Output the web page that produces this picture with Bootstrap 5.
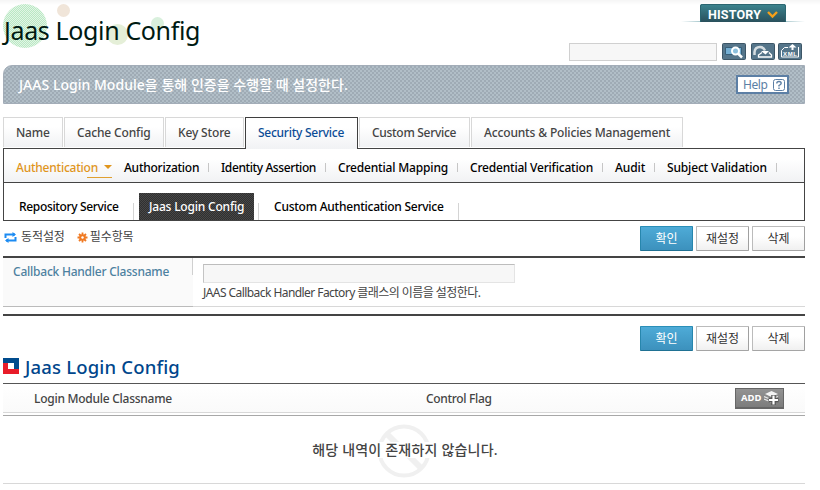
<!DOCTYPE html>
<html lang="ko">
<head>
<meta charset="utf-8">
<title>Jaas Login Config</title>
<link href="https://cdn.jsdelivr.net/npm/bootstrap@5.3.0/dist/css/bootstrap.min.css" rel="stylesheet">
<style>
body{font:500 12px/16px "Noto Sans","Noto Sans CJK KR",sans-serif;color:#444;background:linear-gradient(#f5f5f5,#fff 5px) no-repeat;overflow:hidden;white-space:nowrap}
.page{width:802px;margin-left:3px;height:490px}
.top{height:65px}
.top-title{font-size:25px;font-weight:400;line-height:34px;letter-spacing:-.36px;color:#001a12;padding-top:13px;margin:0 0 0 1px}
.bubbles{left:0;top:0;z-index:-1}
.history{right:0;top:4px}
.search-row{padding:43px 3px 0 0}
.search-box{width:148px;height:18px;border:1px solid #d0d0d0;background:#f7f7f7;border-radius:0;padding:0;margin-right:5px}
.banner{height:39px;border-radius:9px 0 0 0;border:1px solid #a3adb8;background:repeating-conic-gradient(#9fabb5 0 25%,#b1bec7 0 50%) 0 0/4px 4px;color:#fff;font-size:14px;font-weight:500;letter-spacing:.03px;padding:0 15px 0 15px;margin-bottom:13px}
.help{width:53px;height:19px;border:2px solid #5c7fa5;background:#fff;color:#5c7fa5;font-size:12px;font-weight:400;letter-spacing:-.4px;padding:0 2px 0 5px}
.tabs{gap:1px;height:31px}
.tabs .tab{height:30px;border:1px solid #d8d8d8;border-bottom:0;background:linear-gradient(#fff 30%,#f1f2f4);color:#444;line-height:29px;padding:0 0 0 12px}
.tabs .tab.on{height:32px;border-color:#3f3f3f;color:#0b4c96;z-index:1;margin-right:0}
.panel{border:1px solid #444;height:73px}
.lvl2{height:34px;border-bottom:1px solid #444;background:linear-gradient(#fff 30%,#f1f2f4);padding:3px 0 0 12px;color:#000}
.lvl2 span{border-right:1px solid #c6c6c6;height:9px;line-height:9px}
.lvl2 .cur{color:#e0951c;border:0;width:108px}
.caret{left:88px;top:2px;border:4px solid transparent;border-top-color:#e0951c;border-bottom:0}
.cur-line{left:71px;top:14px;width:25px;height:1px;background:#e0a030}
.lvl3{height:37px;color:#000;padding-left:15px}
.lvl3 .it{height:27px;line-height:27px}
.lvl3 .dk{width:115px;padding-left:10px;color:#fff;background:repeating-conic-gradient(#303030 0 25%,#474747 0 50%) 0 0/2px 2px}
.lvl3 .sep{width:1px;height:17px;background:#d4d4d4}
.actions{height:35px;gap:3px;padding-top:5px}
.legend{letter-spacing:-.1px;font-weight:400;line-height:22px}
.cmd{width:53px;height:25px;border:1px solid #bbb;border-right-color:#a0a0a0;border-bottom-color:#a5a5a5;border-radius:1px;background:linear-gradient(#fff 40%,#f0f0f0);color:#333;font-size:12px;font-weight:400;line-height:22px;padding:0}
.cmd.main{background:linear-gradient(#4eabd7,#3c91bd);border-color:#2a8fb8 #2786ad #1f7193;color:#fff}
.form-area{border-top:2px solid #444;border-bottom:2px solid #444;height:60px}
.form-line{height:49px;border-bottom:1px solid #d8d8d8}
.th-name{width:190px;background:#fafafa;color:#4d81a0;padding:6px 0 0 10px;border-bottom:1px solid #bbb;height:49px;letter-spacing:-.23px}
.th-name::after{content:"";position:absolute;right:0;top:0;width:1px;height:17px;background:#d0d0d0}
.field{width:312px;height:19px;border:1px solid #e4e4e4;border-top-color:#bdbdbd;border-left-color:#c4c4c4;border-radius:0;background:#f7f7f7;padding:0}
.note{font-size:12px;font-weight:400;letter-spacing:-.56px;line-height:20px}
.sec-title{font-size:18.5px;font-weight:500;line-height:32px;height:32px;color:#00468c;letter-spacing:.17px;margin:0}
.list-head{border-top:1px solid #555;border-bottom:1px solid #d8d8d8;background:linear-gradient(#fff,#fafafa);height:30px}
.list-head span{padding-top:1px}
.add{width:49px;height:21px;border:1px solid #666;border-bottom-width:2px;border-radius:0;background:linear-gradient(#939393,#7c7c7c);color:#fff;font-size:9.5px;font-weight:700;padding:0 4px 0 5px;line-height:18px}
.empty{border-top:1px solid #a8a8a8;border-bottom:1px solid #d8d8d8;margin-top:2px;height:69px;font-size:14px;color:#444}
.empty-msg{letter-spacing:.2px;padding-left:2px}
svg{display:block;flex:none}
</style>
<script src="https://cdn.jsdelivr.net/npm/bootstrap@5.3.0/dist/js/bootstrap.bundle.min.js"></script>
</head>
<body>
<div class="page">
<header class="top position-relative d-flex justify-content-between">
  <svg class="bubbles position-absolute" width="200" height="60"><defs><pattern id="dots" width="2" height="2" patternUnits="userSpaceOnUse"><path fill="#e2f5e5" d="M0 0h2v2H0z"/><path fill="#b9e8c4" d="M0 0h1v1H0zM1 1h1v1H1z"/></pattern></defs><circle cx="22" cy="26" r="22" fill="url(#dots)"/><circle cx="60.500" cy="10.500" r="6.500" fill="#f0e5d9"/><circle cx="114.500" cy="34.500" r="10.500" fill="#e5efd8"/><circle cx="154.500" cy="23.500" r="6.500" fill="#d9f0dd"/></svg>
  <h1 class="top-title">Jaas Login Config</h1>
  <svg class="history position-absolute" width="124" height="19"><defs><linearGradient id="hg" x2="0" y2="1"><stop stop-color="#3c8590"/><stop offset="1" stop-color="#29505c"/></linearGradient><linearGradient id="hl"><stop stop-color="#8fb8bf" stop-opacity="0"/><stop offset=".2" stop-color="#8fb8bf"/><stop offset=".8" stop-color="#8fb8bf"/><stop offset="1" stop-color="#8fb8bf" stop-opacity="0"/></linearGradient></defs><path fill="url(#hl)" d="M0 17h124v1H0z"/><path fill="url(#hg)" d="M19 18V2q0-2 2-2h82q2 0 2 2v16z"/><path fill="none" stroke="#2b6570" d="M19.500 18V2q0-1.500 2-1.500h81q2 0 2 1.500v16"/><text x="27" y="14.500" fill="#fff" font-family="Roboto" font-size="12.500" font-weight="700" textLength="53">HISTORY</text><path d="M87 8l4.500 4.500L96 8" fill="none" stroke="#f5a01a" stroke-width="2.400"/></svg>
  <div class="search-row d-flex align-items-start">
    <input class="search-box form-control" aria-label="Search">
    <svg width="24" height="17"><rect x=".5" y=".5" width="23" height="16" rx="1" fill="#55758a" stroke="#3d5667"/><path fill="#74aed2" stroke="#375e78" d="M3.500 4.500h16v7h-16z"/><circle cx="13.500" cy="8" r="3.500" fill="#8dc0dd" stroke="#fff" stroke-width="2"/><path stroke="#fff" stroke-width="2.500" d="M16 10.500l4 4"/></svg>
    <svg width="24" height="17" style="margin:0 3px 0 5px"><rect x=".5" y=".5" width="23" height="16" rx="1" fill="#55758a" stroke="#3d5667"/><path d="M3.500 12V9q.5-5 5.500-5 3.500 0 5 3.500" fill="none" stroke="#d5dde1" stroke-width="2.500"/><path fill="#fff" d="M10 8h8l-3.500 3.500z"/><path fill="none" stroke="#fff" stroke-width="1.300" d="M11 9.500L7.500 12v2h13v-2L18 9.500"/></svg>
    <svg width="24" height="17"><rect x=".5" y=".5" width="23" height="16" rx="1" fill="#55758a" stroke="#3d5667"/><path fill="none" stroke="#fff" d="M10 4.500H6.500l-3 3v6.500h17V4"/><path fill="#fff" d="M14.500 1l4 3.500h-3V7h-2V4.500h-3z"/><text x="5" y="13" fill="#fff" font-family="Liberation Sans" font-size="6" font-weight="700" textLength="14">XML</text></svg>
  </div>
</header>
<section class="banner d-flex align-items-center justify-content-between">
  <span>JAAS Login Module을 통해 인증을 수행할 때 설정한다.</span>
  <a class="help d-flex align-items-center justify-content-between text-decoration-none"><span>Help</span><svg width="12" height="12"><rect x=".5" y=".5" width="11" height="11" rx="2" fill="#fff" stroke="#5c7fa5"/><path d="M3.800 4.500q0-2 2.200-2t2.200 1.800q0 1-2.200 2.200v1M6 8.500v1.500" fill="none" stroke="#5c7fa5" stroke-width="1.400"/></svg></a>
</section>
<nav class="tabs d-flex">
  <a class="tab text-decoration-none" style="width:60px;letter-spacing:-.2px">Name</a>
  <a class="tab text-decoration-none" style="width:100px;letter-spacing:-.15px">Cache Config</a>
  <a class="tab text-decoration-none" style="width:79px;letter-spacing:-.15px">Key Store</a>
  <a class="tab on position-relative text-decoration-none" style="width:113px;letter-spacing:-.26px">Security Service</a>
  <a class="tab text-decoration-none" style="width:111px;letter-spacing:-.3px">Custom Service</a>
  <a class="tab text-decoration-none" style="width:212px;letter-spacing:-.15px">Accounts &amp; Policies Management</a>
</nav>
<section class="panel">
  <div class="lvl2 d-flex align-items-center">
    <span class="cur position-relative" style="letter-spacing:-.23px">Authentication<i class="caret position-absolute"></i><i class="cur-line position-absolute"></i></span>
    <span style="width:85px;letter-spacing:-.25px">Authorization</span>
    <span style="width:117px;letter-spacing:-.4px;padding-left:12px">Identity Assertion</span>
    <span style="width:132px;letter-spacing:-.18px;padding-left:12px">Credential Mapping</span>
    <span style="width:145px;letter-spacing:-.2px;padding-left:12px">Credential Verification</span>
    <span style="width:52px;letter-spacing:-.1px;padding-left:12px">Audit</span>
    <span style="width:122px;letter-spacing:-.16px;padding-left:12px">Subject Validation</span>
  </div>
  <div class="lvl3 d-flex align-items-end">
    <span class="it" style="width:114px;letter-spacing:-.34px">Repository Service</span><i class="sep"></i>
    <span class="it dk" style="margin-left:5px;letter-spacing:-.2px">Jaas Login Config</span><i class="sep" style="margin-left:4px"></i>
    <span class="it" style="width:199px;padding-left:15px;letter-spacing:-.24px">Custom Authentication Service</span><i class="sep"></i>
  </div>
</section>
<div class="actions d-flex">
  <div class="legend d-flex me-auto">
    <svg width="13" height="11" style="margin:6px 4px 0 1px"><path d="M1.500 6V2.500H11M11.500 5v3.500H2" fill="none" stroke="#1c8bf2" stroke-width="2"/><path fill="#1c8bf2" d="M8.500 0L12 2.500 8.500 5zM4.500 6L1 8.500 4.500 11z"/></svg>
    <span>동적설정</span>
    <svg width="11" height="11" style="margin:6px 2px 0 12px"><path d="M5.500 .5v10M.5 5.500h10M2 2l7 7M9 2L2 9" stroke="#f07a23" stroke-width="1.800"/><circle cx="5.500" cy="5.500" r="3.200" fill="#f07a23"/><circle cx="5.500" cy="5.500" r="1.200" fill="#fff"/></svg>
    <span>필수항목</span>
  </div>
  <button class="cmd main btn">확인</button><button class="cmd btn">재설정</button><button class="cmd btn">삭제</button>
</div>
<section class="form-area">
  <div class="form-line d-flex">
    <div class="th-name position-relative">Callback Handler Classname</div>
    <div style="padding:6px 0 0 10px"><input class="field form-control" aria-label="Callback Handler Classname"><div class="note">JAAS Callback Handler Factory 클래스의 이름을 설정한다.</div></div>
  </div>
</section>
<div class="actions d-flex justify-content-end" style="padding-top:10px">
  <button class="cmd main btn">확인</button><button class="cmd btn">재설정</button><button class="cmd btn">삭제</button>
</div>
<h2 class="sec-title d-flex"><svg class="me-1" width="16" height="16" style="margin-top:7px"><path fill="#004b8d" d="M0 0h16v16H0z"/><path fill="#e81c29" d="M0 5h5v6h11v5H0z"/><path fill="#fff" d="M5 5h6v6H5z"/></svg><span style="margin-left:2px">Jaas Login Config</span></h2>
<div class="list-head d-flex align-items-center">
  <span style="width:392px;padding-left:31px;letter-spacing:-.26px">Login Module Classname</span>
  <span style="width:340px;padding-left:31px;letter-spacing:-.33px">Control Flag</span>
  <button class="add btn d-flex align-items-center justify-content-between">ADD<svg width="15" height="15"><path fill="#f4f4f4" d="M7.500 1L14 4 7.500 7 1 4z"/><path fill="none" stroke="#e5e5e5" stroke-width="1.300" d="M0 6.500l7.500 3L14 6.500M0 9l7.500 3L14 9"/><path d="M9.500 5v10M4.500 10h10" stroke="#555" stroke-width="4.500"/><path d="M9.500 5.500v9M5 10h9" stroke="#fff" stroke-width="2.200"/></svg></button>
</div>
<div class="empty position-relative d-flex align-items-center justify-content-center">
  <svg class="position-absolute" width="54" height="54" style="left:374px;top:8px"><g fill="none" stroke="#f0f0f0"><circle cx="27" cy="27" r="24.500" stroke-width="4"/><path d="M10 10l34 34" stroke-width="6"/></g><path fill="#fff" d="M0 18h54v16H0z"/></svg>
  <span class="empty-msg position-relative">해당 내역이 존재하지 않습니다.</span>
</div>
</div>
</body>
</html>
